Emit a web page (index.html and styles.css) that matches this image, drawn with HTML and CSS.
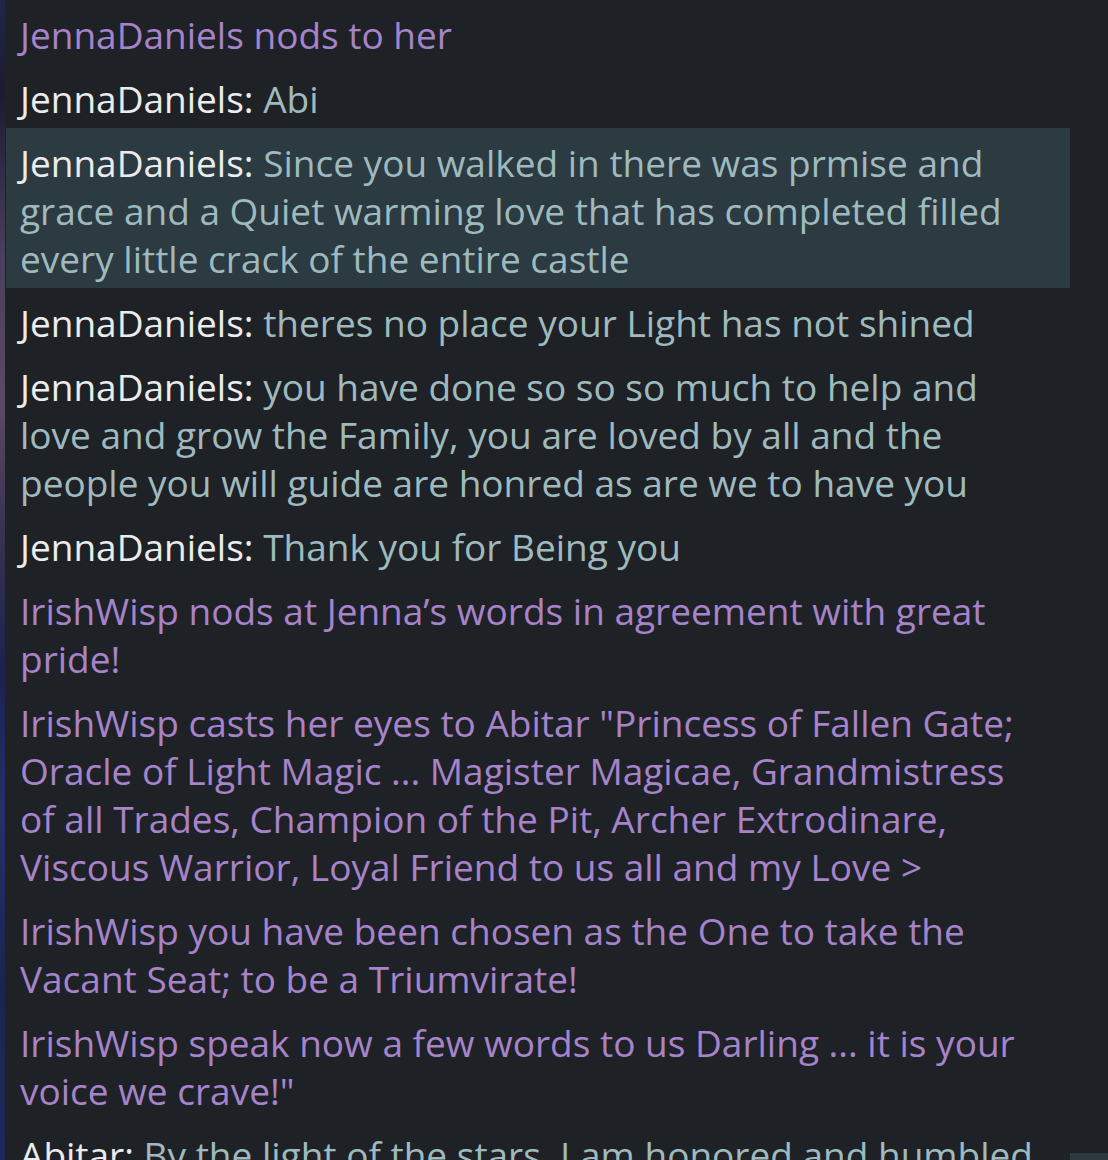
FILE: index.html
```html
<!DOCTYPE html>
<html lang="en">
<head>
<meta charset="utf-8">
<title>Chat log</title>
<link rel="stylesheet" href="styles.css">
</head>
<body>
<div class="window">
  <div class="edge"></div>
  <div class="log">
    <div class="msg emote">JennaDaniels nods to her</div>
    <div class="msg"><span class="name">JennaDaniels:</span> Abi</div>
    <div class="msg selected"><span class="name">JennaDaniels:</span> Since you walked in there was prmise and grace and a Quiet warming love that has completed filled every little crack of the entire castle</div>
    <div class="msg"><span class="name">JennaDaniels:</span> theres no place your Light has not shined</div>
    <div class="msg"><span class="name">JennaDaniels:</span> you have done so so so much to help and love and grow the Family, you are loved by all and the people you will guide are honred as are we to have you</div>
    <div class="msg"><span class="name">JennaDaniels:</span> Thank you for Being you</div>
    <div class="msg emote">IrishWisp nods at Jenna’s words in agreement with great pride!</div>
    <div class="msg emote">IrishWisp casts her eyes to Abitar "Princess of Fallen Gate; Oracle of Light Magic ... Magister Magicae, Grandmistress of all Trades, Champion of the Pit, Archer Extrodinare, Viscous Warrior, Loyal Friend to us all and my Love &gt;</div>
    <div class="msg emote">IrishWisp you have been chosen as the One to take the Vacant Seat; to be a Triumvirate!</div>
    <div class="msg emote">IrishWisp speak now a few words to us Darling ... it is your voice we crave!"</div>
    <div class="msg"><span class="name">Abitar:</span> By the light of the stars, I am honored and humbled by all of your words, and I will do my best to deserve them</div>
  </div>
  <div class="scroll">
    <div class="track"></div>
    <div class="thumb"></div>
  </div>
</div>
</body>
</html>
```
FILE: styles.css
```css
html, body {
  margin: 0;
  padding: 0;
  background: #1e2226;
  overflow: hidden;
}
.window {
  display: flex;
  height: 1160px;
  overflow: hidden;
  background: #1e2226;
}
.edge {
  width: 5px;
  flex: none;
  background: linear-gradient(180deg, #22254a 0%, #1a1c2e 8%, #4a3f5c 22%, #5a4a66 35%, #3a3450 45%, #1a2250 58%, #24306a 70%, #1a2450 85%, #1c2a5a 100%);
}
.log {
  width: 1064px;
  flex: none;
  margin-left: 1px;
  padding-top: 0;
  font-family: "Open Sans", "Noto Sans", sans-serif;
  font-size: 37px;
  line-height: 48px;
  color: #9fbabe;
}
.msg {
  padding: 11px 30px 5px 14px;
}
.msg.selected {
  background: #2c3b41;
}
.name {
  color: #ececec;
}
.emote {
  color: #a783ca;
}
.scroll {
  flex: 1;
  display: flex;
  flex-direction: column;
}
.track {
  flex: 1;
}
.thumb {
  height: 7px;
  background: #2c3a40;
}
```
